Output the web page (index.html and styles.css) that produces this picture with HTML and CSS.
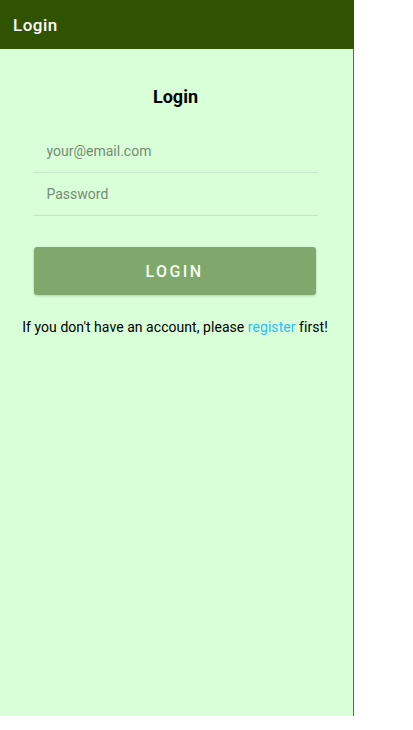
FILE: index.html
```html
<!DOCTYPE html>
<html>
<head>
<meta charset="utf-8">
<link rel="stylesheet" href="styles.css">
</head>
<body>
<div class="app">
  <header class="topbar">Login</header>
  <main class="content">
    <h1 class="title">Login</h1>
    <form class="form">
      <div class="field"><input type="email" placeholder="your@email.com"></div>
      <div class="field"><input type="password" placeholder="Password"></div>
      <button type="button" class="btn">LOGIN</button>
    </form>
    <p class="note">If you don't have an account, please <a href="#">register</a> first!</p>
  </main>
</div>
</body>
</html>
```
FILE: styles.css
```css
html, body {
  margin: 0;
  padding: 0;
  background: #ffffff;
  font-family: Roboto, "Noto Sans", sans-serif;
}
.app {
  width: 354px;
  height: 716px;
  display: flex;
  flex-direction: column;
}
.topbar {
  height: 49px;
  background: #2f5300;
  color: #ffffff;
  font-size: 17px;
  font-weight: 500;
  letter-spacing: 0.5px;
  display: flex;
  align-items: center;
  padding-left: 13px;
  box-sizing: border-box;
}
.content {
  flex: 1;
  background: #d9ffd9;
  border-right: 1px solid #5c6b5c;
  display: flex;
  flex-direction: column;
  align-items: center;
}
.title {
  margin: 37px 0 0 -2px;
  font-size: 18px;
  font-weight: 700;
  color: #000;
  line-height: 22px;
}
.form {
  width: 285px;
  margin-top: 22px;
  margin-left: -3px;
  display: flex;
  flex-direction: column;
}
.field {
  border-bottom: 1px solid #c5e6c8;
  height: 42px;
  display: flex;
  align-items: center;
}
.field input {
  border: none;
  background: transparent;
  outline: none;
  font-family: Roboto, sans-serif;
  font-size: 14px;
  padding: 0 0 0 14px;
  width: 100%;
  color: #333;
}
.field input::placeholder {
  color: #768a76;
}
.btn {
  margin: 31px 2px 0 1px;
  height: 48px;
  border: none;
  border-radius: 3px;
  background: #80a86c;
  color: #f3fff0;
  font-family: Roboto, sans-serif;
  font-size: 16px;
  font-weight: 500;
  letter-spacing: 2.4px;
  box-shadow: 0 1px 3px rgba(0,0,0,0.2);
}
.note {
  margin: 23px 0 0 -3px;
  font-size: 14px;
  color: #000;
  line-height: 18px;
  letter-spacing: 0.05px;
}
.note a {
  color: #2ebcf4;
  text-decoration: none;
}
```
